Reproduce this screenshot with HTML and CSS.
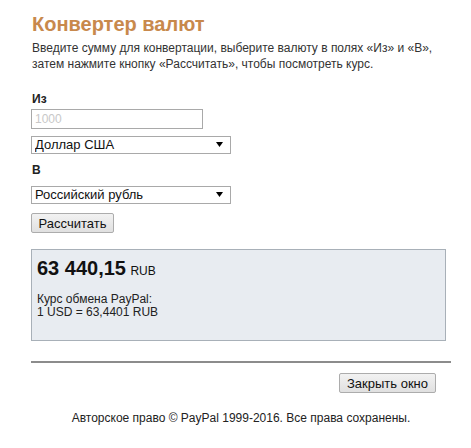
FILE: index.html
```html
<!DOCTYPE html>
<html lang="ru">
<head>
<meta charset="utf-8">
<title>Конвертер валют</title>
<link rel="stylesheet" href="styles.css">
</head>
<body>
<div class="page">
  <h1 class="title">Конвертер валют</h1>
  <p class="intro">Введите сумму для конвертации, выберите валюту в полях «Из» и «В»,<br>затем нажмите кнопку «Рассчитать», чтобы посмотреть курс.</p>

  <label class="field-label label-from" for="amount">Из</label>
  <input class="amount" id="amount" type="text" placeholder="1000">
  <div class="select-wrap select-from">
    <select class="select"><option>Доллар США</option></select>
    <svg class="arrow" width="7" height="5" viewBox="0 0 7 5"><path d="M0 0H7L3.5 5Z" fill="#000"/></svg>
  </div>

  <label class="field-label label-to">В</label>
  <div class="select-wrap select-to">
    <select class="select"><option>Российский рубль</option></select>
    <svg class="arrow" width="7" height="5" viewBox="0 0 7 5"><path d="M0 0H7L3.5 5Z" fill="#000"/></svg>
  </div>

  <button class="btn btn-calc" type="button">Рассчитать</button>

  <div class="result">
    <div class="result-amount"><span class="num">63 440,15</span> <span class="cur">RUB</span></div>
    <p class="rate">Курс обмена PayPal:<br>1 USD = 63,4401 RUB</p>
  </div>

  <div class="divider"></div>

  <div class="actions">
    <button class="btn btn-close" type="button">Закрыть окно</button>
  </div>

  <p class="footer">Авторское право © PayPal 1999-2016. Все права сохранены.</p>
</div>
</body>
</html>
```

FILE: styles.css
```css
html, body {
  margin: 0;
  padding: 0;
  background: #fff;
}
body {
  font-family: "Liberation Sans", Arial, sans-serif;
  color: #333;
}
.page {
  width: 420px;
  padding: 0 20px 0 31px;
  display: flex;
  flex-direction: column;
  align-items: flex-start;
}
.title {
  margin: 13px 0 0 1px;
  font-size: 20px;
  line-height: 23px;
  font-weight: bold;
  color: #c8894c;
}
.intro {
  margin: 4px 0 0 1px;
  font-size: 12px;
  line-height: 16px;
  color: #333;
}
.field-label {
  display: block;
  font-size: 12px;
  line-height: 14px;
  font-weight: bold;
  color: #222;
  margin-left: 1px;
}
.label-from { margin-top: 20px; }
.label-to { margin-top: 10px; }
.amount {
  box-sizing: border-box;
  width: 172px;
  height: 20px;
  margin: 3px 0 0 0;
  padding: 0 3px;
  border: 1px solid #a9a9a9;
  font-family: inherit;
  font-size: 12px;
  color: #333;
  outline: none;
}
.amount::placeholder { color: #c8c8c8; }
.select-wrap {
  position: relative;
  width: 200px;
  height: 18px;
}
.select-from { margin-top: 6px; }
.select-to { margin-top: 8px; }
.select {
  -webkit-appearance: none;
  appearance: none;
  box-sizing: border-box;
  width: 100%;
  height: 100%;
  margin: 0;
  padding: 0 0 0 3px;
  border: 1px solid #a9a9a9;
  border-radius: 0;
  background: #fff;
  font-family: inherit;
  font-size: 13px;
  color: #111;
}
.arrow {
  position: absolute;
  right: 8px;
  top: 7px;
  pointer-events: none;
}
.btn {
  box-sizing: border-box;
  height: 20px;
  padding: 0 5px;
  border: 1px solid #acacac;
  border-radius: 2px;
  background: linear-gradient(#f2f2f2, #e0e0e0);
  font-family: inherit;
  font-size: 13px;
  color: #111;
}
.btn-calc {
  margin-top: 10px;
  width: 83px;
}
.result {
  box-sizing: border-box;
  width: 415px;
  height: 92px;
  margin-top: 16px;
  padding: 7px 5px 0 5px;
  background: #e8ecf1;
  border: 1px solid #a8b0b8;
}
.result-amount {
  line-height: 23px;
  color: #111;
}
.num {
  font-size: 20px;
  font-weight: bold;
}
.cur {
  font-size: 12px;
}
.rate {
  margin: 10px 0 0 0;
  font-size: 12px;
  line-height: 13px;
  color: #222;
}
.divider {
  width: 420px;
  height: 2px;
  margin-top: 20px;
  background: #8c8c8c;
}
.actions {
  width: 405px;
  display: flex;
  justify-content: flex-end;
  margin-top: 10px;
}
.btn-close {
  width: 97px;
}
.footer {
  width: 420px;
  margin: 18px 0 0 0;
  text-align: center;
  font-size: 12px;
  line-height: 14px;
  color: #222;
}
```
